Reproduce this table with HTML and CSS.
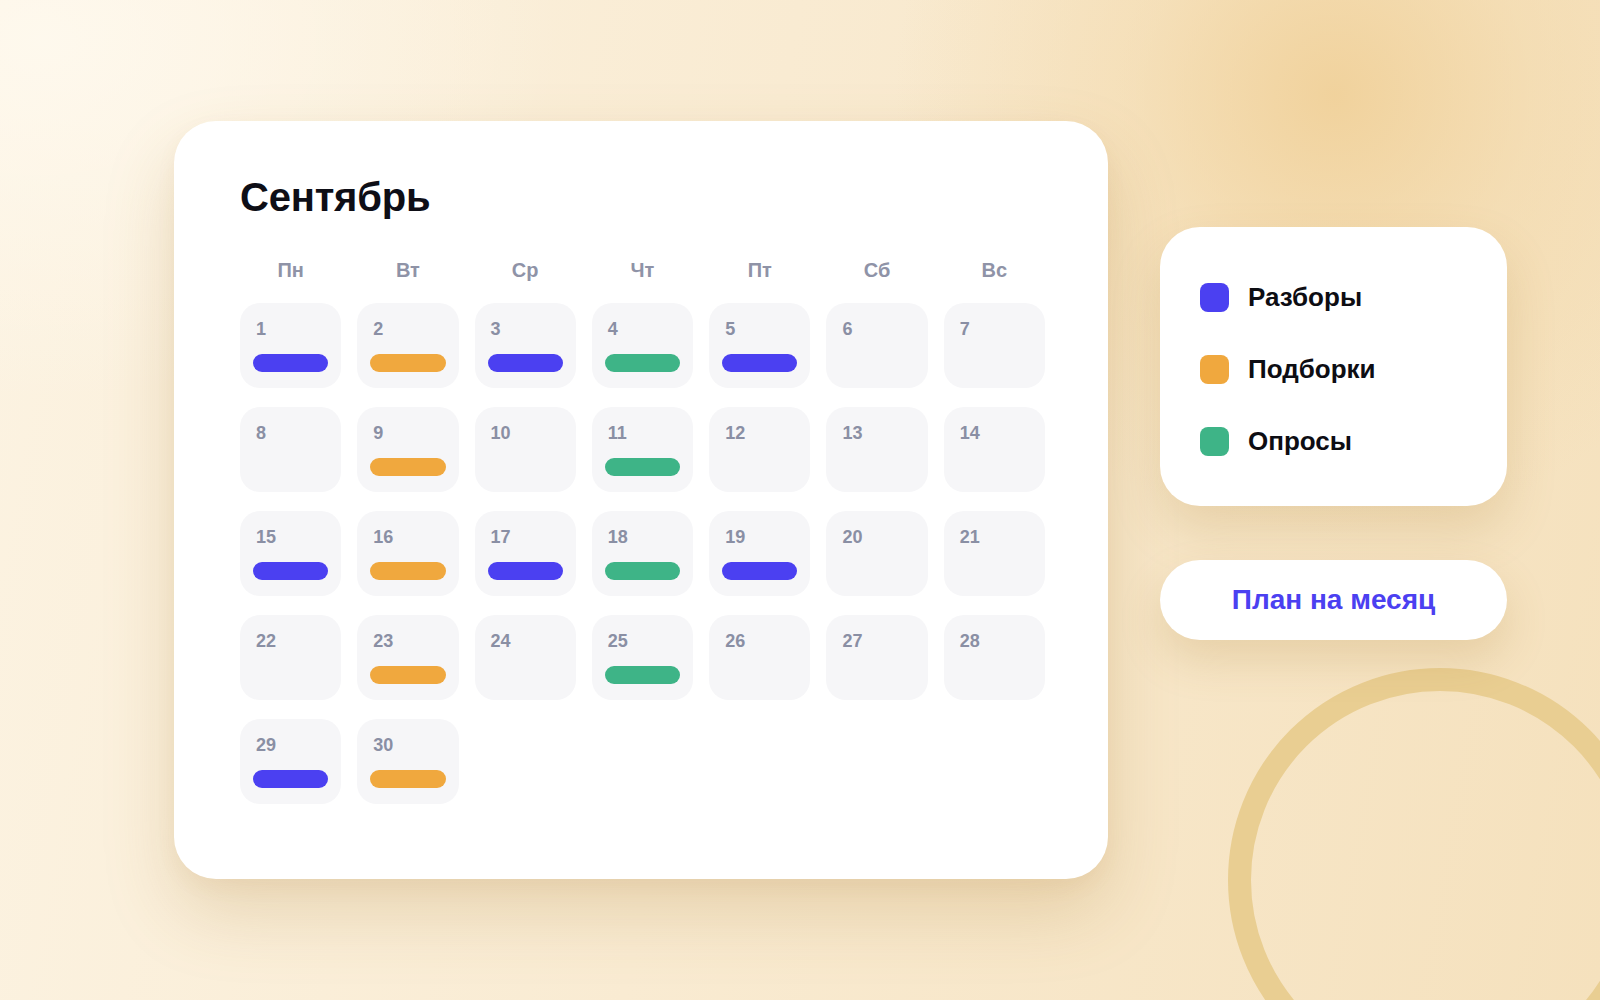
FILE: index.html
```html
<!DOCTYPE html>
<html lang="ru">
<head>
<meta charset="utf-8">
<title>Сентябрь</title>
<link rel="stylesheet" href="styles.css">
</head>
<body>
<svg class="ring" width="400" height="350" viewBox="0 0 400 350" aria-hidden="true">
  <circle cx="240" cy="230" r="200.5" fill="none" stroke="#e9ce92" stroke-width="23"/>
</svg>
<main class="stage">
  <section class="calendar">
    <h1 class="month">Сентябрь</h1>
    <div class="weekdays">
      <span>Пн</span><span>Вт</span><span>Ср</span><span>Чт</span><span>Пт</span><span>Сб</span><span>Вс</span>
    </div>
    <div class="days">
      <div class="day"><span class="num">1</span><span class="bar blue"></span></div>
      <div class="day"><span class="num">2</span><span class="bar orange"></span></div>
      <div class="day"><span class="num">3</span><span class="bar blue"></span></div>
      <div class="day"><span class="num">4</span><span class="bar green"></span></div>
      <div class="day"><span class="num">5</span><span class="bar blue"></span></div>
      <div class="day"><span class="num">6</span></div>
      <div class="day"><span class="num">7</span></div>

      <div class="day"><span class="num">8</span></div>
      <div class="day"><span class="num">9</span><span class="bar orange"></span></div>
      <div class="day"><span class="num">10</span></div>
      <div class="day"><span class="num">11</span><span class="bar green"></span></div>
      <div class="day"><span class="num">12</span></div>
      <div class="day"><span class="num">13</span></div>
      <div class="day"><span class="num">14</span></div>

      <div class="day"><span class="num">15</span><span class="bar blue"></span></div>
      <div class="day"><span class="num">16</span><span class="bar orange"></span></div>
      <div class="day"><span class="num">17</span><span class="bar blue"></span></div>
      <div class="day"><span class="num">18</span><span class="bar green"></span></div>
      <div class="day"><span class="num">19</span><span class="bar blue"></span></div>
      <div class="day"><span class="num">20</span></div>
      <div class="day"><span class="num">21</span></div>

      <div class="day"><span class="num">22</span></div>
      <div class="day"><span class="num">23</span><span class="bar orange"></span></div>
      <div class="day"><span class="num">24</span></div>
      <div class="day"><span class="num">25</span><span class="bar green"></span></div>
      <div class="day"><span class="num">26</span></div>
      <div class="day"><span class="num">27</span></div>
      <div class="day"><span class="num">28</span></div>

      <div class="day"><span class="num">29</span><span class="bar blue"></span></div>
      <div class="day"><span class="num">30</span><span class="bar orange"></span></div>
    </div>
  </section>

  <aside class="side">
    <ul class="legend">
      <li class="legend-item"><span class="swatch blue"></span>Разборы</li>
      <li class="legend-item"><span class="swatch orange"></span>Подборки</li>
      <li class="legend-item"><span class="swatch green"></span>Опросы</li>
    </ul>
    <button class="plan-btn" type="button">План на месяц</button>
  </aside>
</main>
</body>
</html>
```

FILE: styles.css
```css
* { box-sizing: border-box; }

html, body {
  margin: 0;
  padding: 0;
  overflow: hidden;
}

body {
  width: 1600px;
  height: 1000px;
  position: relative;
  font-family: "Liberation Sans", Arial, sans-serif;
  background:
    radial-gradient(circle at 1335px 95px, rgba(240, 208, 152, 0.9) 0, rgba(242, 214, 164, 0.45) 200px, rgba(244, 218, 172, 0) 440px),
    radial-gradient(ellipse 520px 360px at 40px 40px, rgba(255, 250, 240, 0.8) 0, rgba(255, 250, 240, 0) 100%),
    linear-gradient(100deg, #fcf3e2 0%, #f9ebd2 45%, #f5e1bd 100%);
}

.ring {
  position: absolute;
  left: 1200px;
  top: 650px;
  display: block;
}

.stage {
  position: relative;
  display: flex;
  align-items: flex-start;
  gap: 52px;
  padding: 121px 0 0 174px;
}

/* Calendar card */
.calendar {
  width: 934px;
  height: 758px;
  background: #ffffff;
  border-radius: 42px;
  padding: 52px 63px 0 66px;
  box-shadow: 0 34px 70px rgba(170, 125, 45, 0.22), 0 8px 20px rgba(170, 125, 45, 0.06);
}

.month {
  margin: 0;
  font-size: 40px;
  line-height: 48px;
  font-weight: 700;
  color: #0e0e16;
  letter-spacing: -0.2px;
}

.weekdays {
  display: grid;
  grid-template-columns: repeat(7, 1fr);
  column-gap: 16px;
  margin-top: 37px;
  width: 805px;
}

.weekdays span {
  text-align: center;
  font-size: 20px;
  line-height: 24px;
  font-weight: 700;
  color: #8f93a7;
}

.days {
  display: grid;
  grid-template-columns: repeat(7, 1fr);
  grid-auto-rows: 85px;
  column-gap: 16px;
  row-gap: 19px;
  margin-top: 21px;
  width: 805px;
}

.day {
  background: #f6f6f8;
  border-radius: 20px;
  padding: 15px 13px 0 13px;
  display: flex;
  flex-direction: column;
}

.num {
  padding-left: 3px;
  font-size: 18px;
  line-height: 22px;
  font-weight: 700;
  color: #8a8fa4;
}

.bar {
  display: block;
  height: 18px;
  margin-top: 14px;
  border-radius: 9px;
}

.blue { background: #4b40f1; }
.orange { background: #f0a83e; }
.green { background: #3eb487; }

/* Side column */
.side {
  width: 347px;
  margin-top: 106px;
  display: flex;
  flex-direction: column;
  gap: 54px;
}

.legend {
  list-style: none;
  margin: 0;
  padding: 56px 40px 50px 40px;
  background: #ffffff;
  border-radius: 40px;
  display: flex;
  flex-direction: column;
  gap: 43px;
  box-shadow: 0 24px 50px rgba(170, 125, 45, 0.2);
}

.legend-item {
  display: flex;
  align-items: center;
  gap: 19px;
  height: 29px;
  font-size: 26px;
  font-weight: 700;
  color: #0d0d13;
}

.swatch {
  width: 29px;
  height: 29px;
  border-radius: 8px;
  flex: none;
}

.plan-btn {
  height: 80px;
  border: none;
  border-radius: 40px;
  background: #ffffff;
  font-family: "Liberation Sans", Arial, sans-serif;
  font-size: 28px;
  font-weight: 700;
  color: #4b40f1;
  box-shadow: 0 20px 44px rgba(170, 125, 45, 0.2);
  padding: 0;
  cursor: pointer;
}
```
